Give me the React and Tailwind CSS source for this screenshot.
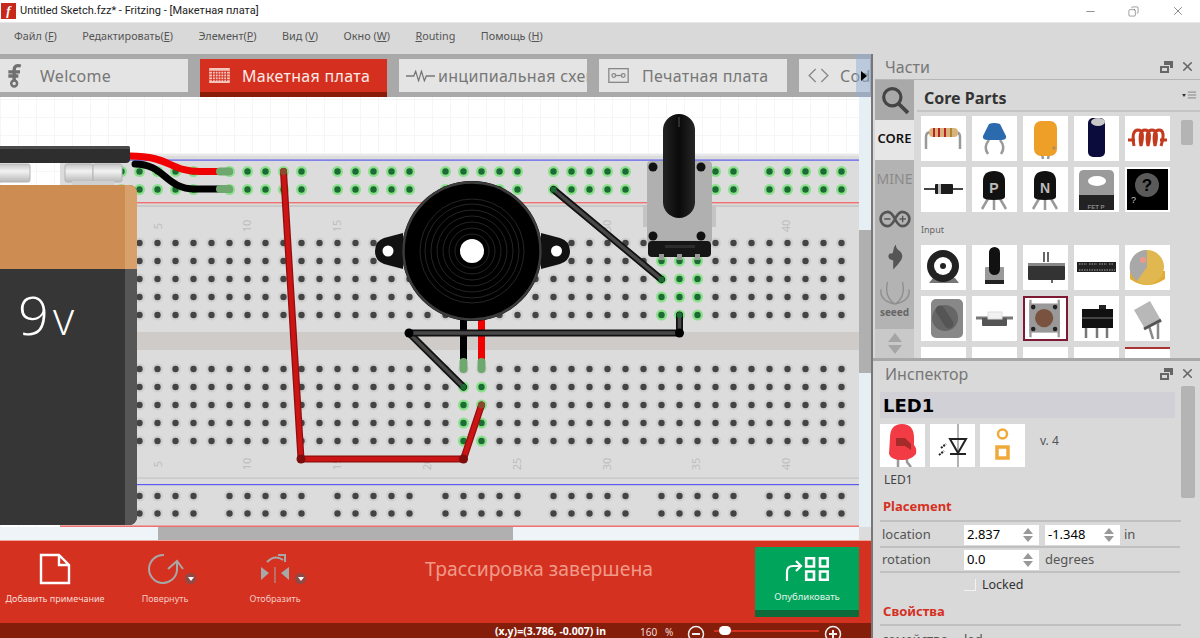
import { Minus, X, Copy, AlignJustify } from "lucide-react";

const menu = [
  ["Файл (", "F", ")"],
  ["Редактировать(", "E", ")"],
  ["Элемент(", "P", ")"],
  ["Вид (", "V", ")"],
  ["Окно (", "W", ")"],
  ["", "R", "outing"],
  ["Помощь (", "H", ")"],
];

const railGroups = [0, 6, 12, 18, 24, 30, 36];
const colX = (k) => 121.5 + 18 * k;

function Hole({ x, y, green }) {
  return (
    <g>
      <circle cx={x} cy={y} r="5.5" fill={green ? "#8ae08a" : "#cfcfcf"} />
      <circle cx={x} cy={y} r="3.2" fill={green ? "#1c6b34" : "#444"} />
    </g>
  );
}

function isGreen(k, y) {
  const x = colX(k);
  if ([661.5, 679.5, 697.5].includes(x) && y > 250 && y < 320) return true;
  if ([463.5, 481.5].includes(x) && y > 380 && y < 445) return true;
  return false;
}

function Wire({ d, outer, inner, w = 3.5 }) {
  return (
    <g fill="none" strokeLinecap="round" strokeLinejoin="round">
      <path d={d} stroke={outer} strokeWidth="7" />
      <path d={d} stroke={inner} strokeWidth={w} />
    </g>
  );
}

function Breadboard() {
  const holes = [];
  for (const start of railGroups) {
    for (let i = 0; i < 5; i++) {
      holes.push(<Hole key={`t${start}${i}a`} x={colX(start + i)} y={171.5} green />);
      holes.push(<Hole key={`t${start}${i}b`} x={colX(start + i)} y={189.5} green />);
      holes.push(<Hole key={`b${start}${i}a`} x={colX(start + i)} y={496} />);
      holes.push(<Hole key={`b${start}${i}b`} x={colX(start + i)} y={513.5} />);
    }
  }
  for (let k = 0; k < 41; k++) {
    for (const y of [243, 261, 279, 297, 315, 369, 387, 405, 423, 441]) {
      holes.push(<Hole key={`m${k}${y}`} x={colX(k)} y={y} green={isGreen(k, y)} />);
    }
  }

  return (
    <svg viewBox="0 97 859 430" className="block w-[859px] h-[430px]">
      <defs>
        <pattern id="grid" x="0" y="99" width="18" height="18" patternUnits="userSpaceOnUse">
          <path d="M18 0H0V18" fill="none" stroke="#e9eef2" strokeWidth="1" />
        </pattern>
        <linearGradient id="knob" x1="0" x2="1" y1="0" y2="0">
          <stop offset="0" stopColor="#222" />
          <stop offset="0.5" stopColor="#0a0a0a" />
          <stop offset="1" stopColor="#262626" />
        </linearGradient>
        <linearGradient id="metal" x1="0" x2="0" y1="0" y2="1">
          <stop offset="0" stopColor="#c4c4c4" />
          <stop offset="0.4" stopColor="#f2f2f2" />
          <stop offset="1" stopColor="#b8b8b8" />
        </linearGradient>
      </defs>
      <rect x="0" y="97" width="859" height="430" fill="#fff" />
      <rect x="0" y="97" width="859" height="430" fill="url(#grid)" />

      {/* board */}
      <rect x="60" y="154" width="799" height="373" fill="#dcdcdc" />
      <rect x="60" y="154" width="799" height="2" fill="#e8e8e8" />
      <rect x="60" y="205" width="799" height="2" fill="#c9c9c9" />
      <rect x="60" y="159.5" width="799" height="1.2" fill="#5a5af0" />
      <rect x="60" y="202" width="799" height="1.4" fill="#f07070" />
      <rect x="60" y="332" width="799" height="18" fill="#cfcbc9" />
      <rect x="60" y="477.5" width="799" height="1.2" fill="#c4c4c4" />
      <rect x="60" y="484" width="799" height="1.2" fill="#5a5af0" />
      <rect x="60" y="525.5" width="799" height="1.5" fill="#f07070" />

      {holes}

      <g fill="#bdbdbd" fontSize="11" fontFamily="'Noto Sans', sans-serif" textAnchor="middle">
        {[[159, "5"], [248, "10"], [338, "15"], [608, "30"], [787, "40"]].map(([x, t]) => (
          <text key={t} x={x} y={226} transform={`rotate(-90 ${x} 226)`} dominantBaseline="middle">{t}</text>
        ))}
        {[[159, "5"], [248, "10"], [338, "15"], [428, "20"], [518, "25"], [608, "30"], [697, "35"], [787, "40"]].map(([x, t]) => (
          <text key={t} x={x} y={464} transform={`rotate(-90 ${x} 464)`} dominantBaseline="middle">{t}</text>
        ))}
      </g>

      {/* battery wires */}
      <g fill="none" strokeLinecap="round">
        <path d="M135 164 C165 164 165 189 195 189 L226 189" stroke="#000" strokeWidth="7" />
        <path d="M130 156 C170 156 170 171.5 200 171.5 L226 171.5" stroke="#f00000" strokeWidth="7" />
        <path d="M220 171.5 H229" stroke="#6fa86f" strokeWidth="8" />
        <path d="M220 189 H229" stroke="#6fa86f" strokeWidth="8" />
      </g>

      {/* 9v battery */}
      <g>
        <rect x="-6" y="146" width="136" height="17" rx="4" fill="#2e2e2e" />
        <rect x="-6" y="146" width="136" height="3" rx="1.5" fill="#4a4a4a" />
        <g fill="url(#metal)" stroke="#b5b5b5">
          <rect x="-8" y="164" width="38" height="18" rx="2" />
          <rect x="65" y="164" width="28" height="18" rx="2" />
          <rect x="93" y="164" width="29" height="18" rx="2" />
        </g>
        <rect x="72" y="181" width="42" height="6" fill="#cfcfcf" />
        <rect x="-8" y="185" width="145" height="340" rx="8" fill="#363636" />
        <path d="M-8 269V193a8 8 0 0 1 8-8H129a8 8 0 0 1 8 8V269Z" fill="#cd8d52" />
        <path d="M125 269V185h4a8 8 0 0 1 8 8V269Z" fill="#d8a06a" />
        <path d="M125 269H137V517a8 8 0 0 1-8 8H125Z" fill="#565656" />
        <text x="18" y="335" fill="#fff" fontSize="54" fontFamily="'Open Sans', sans-serif" fontWeight="300">9</text>
        <text x="53" y="335" fill="#fff" fontSize="46" fontFamily="'Open Sans', sans-serif" fontWeight="300">v</text>
      </g>

      {/* buzzer legs */}
      <path d="M463.5 315V365" stroke="#000" strokeWidth="7" />
      <path d="M481.5 315V365" stroke="#f00000" strokeWidth="7" />
      <path d="M463.5 362V369M481.5 362V369" stroke="#6fa86f" strokeWidth="8" strokeLinecap="round" />

      {/* wires */}
      <Wire d="M553.5 189.5L661.5 279.5" outer="#111" inner="#484848" />
      <Wire d="M409 333L463.5 387" outer="#111" inner="#484848" />
      <Wire d="M409 333H679.5V315" outer="#111" inner="#484848" />
      <circle cx="409" cy="333" r="4.5" fill="#000" />
      <circle cx="679.5" cy="333" r="4.5" fill="#000" />
      <Wire d="M283.5 171.5L301 459H463.5L481.5 405" outer="#8f0f0f" inner="#cc1414" w={4.5} />
      <circle cx="301" cy="459" r="4.5" fill="#7d0c0c" />
      <circle cx="463.5" cy="459" r="4.5" fill="#7d0c0c" />
      <circle cx="283.5" cy="171.5" r="3.5" fill="#8a4a30" />
      <circle cx="481.5" cy="405" r="3.5" fill="#8a4a30" />
      <circle cx="553.5" cy="189.5" r="3" fill="#1c6b34" />
      <circle cx="661.5" cy="279.5" r="3" fill="#1c6b34" />
      <circle cx="463.5" cy="387" r="3" fill="#1c6b34" />
      <circle cx="679.5" cy="315" r="3" fill="#1c6b34" />

      {/* buzzer */}
      <path d="M403 233L384 238Q375 241 375 251Q375 261 384 264L403 269Z" fill="#111" />
      <path d="M541 233L560 238Q570 241 570 251Q570 261 560 264L541 269Z" fill="#111" />
      <circle cx="388" cy="251" r="5.5" fill="#fff" />
      <circle cx="556.5" cy="251" r="5.5" fill="#fff" />
      <circle cx="472" cy="251" r="70" fill="#000" />
      <circle cx="472" cy="251" r="68.5" fill="none" stroke="#3c3c3c" strokeWidth="2.5" />
      <g fill="none" stroke="#2f2f2f" strokeWidth="0.8">
        {[17, 23, 29, 35, 41, 47, 52].map((r) => (
          <circle key={r} cx="472" cy="251" r={r} />
        ))}
      </g>
      <circle cx="472" cy="251" r="12" fill="#fff" />

      {/* potentiometer */}
      <rect x="643" y="205" width="4" height="22" fill="#c4c4c4" />
      <rect x="712" y="205" width="4" height="22" fill="#c4c4c4" />
      <rect x="647" y="161" width="65" height="82" rx="4" fill="#b0b0b0" />
      <rect x="648" y="241" width="63" height="16" rx="4" fill="#161616" />
      <rect x="665" y="245" width="30" height="3" fill="#2c2c2c" />
      <g fill="#999">
        <rect x="659" y="254" width="5" height="6" />
        <rect x="677" y="254" width="5" height="6" />
        <rect x="695" y="254" width="5" height="6" />
      </g>
      {[[653, 167], [701, 167], [653, 236], [701, 236]].map(([x, y]) => (
        <circle key={`${x}${y}`} cx={x} cy={y} r="4.5" fill="#111" />
      ))}
      <rect x="663" y="114" width="32" height="104" rx="16" fill="url(#knob)" />
      <path d="M679 117V127" stroke="#555" strokeWidth="1" />
    </svg>
  );
}

// little pictures in the parts bin
const T = ({ children, picked }) => (
  <div className={`w-[45px] h-[45px] bg-white shrink-0 ${picked ? "border-2 border-[#7d1a33]" : ""}`}>
    <svg viewBox="0 0 45 45" className="w-full h-full block">{children}</svg>
  </div>
);

const leg = { fill: "none", stroke: "#999", strokeWidth: 2.5 };

const row1 = [
  <>
    <path d="M5 33V21Q5 16 10 16H34Q39 16 39 21V33" {...leg} />
    <rect x="8" y="12" width="29" height="9" rx="4" fill="#d8b37c" />
    <path d="M13 12v9M18 12v9M24 12v9" stroke="#b22" strokeWidth="2" />
    <path d="M30 12v9" stroke="#a83" strokeWidth="2" />
  </>,
  <>
    <path d="M17 24Q11 31 16 38M28 24Q34 31 29 38" {...leg} />
    <path d="M17 8Q22 6 28 8L34 20Q35 24 29 24H16Q10 24 11 20Z" fill="#2b6bad" />
  </>,
  <>
    <path d="M19 38l1 5M26 38l-1 5" {...leg} />
    <rect x="11" y="5" width="23" height="35" rx="7" fill="#ee9f28" />
    <path d="M29 32h4M31 30v4" stroke="#a86" strokeWidth="1" />
  </>,
  <>
    <rect x="14" y="2" width="17" height="39" rx="5" fill="#0c0c3c" />
    <ellipse cx="24" cy="6" rx="7" ry="4" fill="#c8c8c8" />
  </>,
  <>
    <path d="M3 24H10M35 24H42" stroke="#c33a1e" strokeWidth="3" />
    <path d="M9 30Q6 14 13 14T16 30Q13 14 20 14T23 30Q20 14 27 14T30 30Q27 14 34 14T36 30" fill="none" stroke="#c33a1e" strokeWidth="3" />
  </>,
];

const row2 = [
  <>
    <path d="M3 22H42" stroke="#444" strokeWidth="2" />
    <rect x="14" y="17" width="18" height="10" rx="1" fill="#1c1c1c" />
    <rect x="17" y="17" width="3" height="10" fill="#bbb" />
  </>,
  <>
    <path d="M22 30V43M17 30L10 42M27 30L34 42" {...leg} />
    <path d="M11 14Q11 4 22 4Q33 4 33 14V30Q33 33 22 33Q11 33 11 30Z" fill="#111" />
    <text x="22" y="26" fill="#bbb" fontSize="14" fontWeight="700" textAnchor="middle" fontFamily="'Liberation Sans', sans-serif">P</text>
  </>,
  <>
    <path d="M22 30V43M17 30L10 42M27 30L34 42" {...leg} />
    <path d="M11 14Q11 4 22 4Q33 4 33 14V30Q33 33 22 33Q11 33 11 30Z" fill="#111" />
    <text x="22" y="26" fill="#bbb" fontSize="14" fontWeight="700" textAnchor="middle" fontFamily="'Liberation Sans', sans-serif">N</text>
  </>,
  <>
    <path d="M5 8Q5 3 10 3H35Q40 3 40 8V42H5Z" fill="#9a9a9a" />
    <ellipse cx="23" cy="14" rx="9" ry="5" fill="#fff" />
    <rect x="5" y="28" width="35" height="15" fill="#222" />
    <text x="22" y="42" fill="#888" fontSize="6" fontWeight="700" textAnchor="middle" fontFamily="'Liberation Sans', sans-serif">FET P</text>
  </>,
  <>
    <rect x="2" y="2" width="41" height="41" fill="#000" />
    <circle cx="22" cy="18" r="12" fill="#5a5a5a" />
    <text x="22" y="24" fill="#000" fontSize="17" fontWeight="700" textAnchor="middle" fontFamily="'Liberation Sans', sans-serif">?</text>
    <text x="6" y="36" fill="#ccc" fontSize="9" fontFamily="'Liberation Sans', sans-serif">?</text>
  </>,
];

const row3 = [
  <>
    <path d="M8 38H38L34 33H12Z" fill="#777" />
    <circle cx="22" cy="21" r="16" fill="#222" />
    <circle cx="22" cy="21" r="9" fill="#fff" />
    <circle cx="22" cy="21" r="3" fill="#222" />
  </>,
  <>
    <rect x="13" y="22" width="19" height="15" rx="1" fill="#999" />
    <rect x="17" y="2" width="11" height="28" rx="5.5" fill="#111" />
    <rect x="13" y="35" width="19" height="4" fill="#222" />
  </>,
  <>
    <path d="M21 7v10M25 7v10" stroke="#666" strokeWidth="2" />
    <rect x="5" y="18" width="37" height="7" fill="#888" />
    <rect x="5" y="21" width="37" height="14" rx="1" fill="#333" />
    <path d="M29 35v3" stroke="#666" strokeWidth="2" />
  </>,
  <>
    <rect x="3" y="17" width="39" height="10" fill="#222" />
    <path d="M5 19h8M15 19h8M25 19h8M35 19h5M5 25h36" stroke="#aaa" strokeWidth="1" strokeDasharray="1.5 1" />
  </>,
  <>
    <path d="M5 34Q22 46 40 34V26H5Z" fill="#e0ac35" />
    <circle cx="22" cy="22" r="17" fill="#e0b84f" />
    <path d="M22 5A17 17 0 0 0 12 36L22 22Z" fill="#a8a8a8" />
    <circle cx="18" cy="15" r="3" fill="#e98" />
  </>,
];

const row4 = [
  <>
    <rect x="10" y="3" width="32" height="39" rx="5" fill="#888" />
    <circle cx="24" cy="22" r="13" fill="#666" />
    <path d="M19 14L28 28" stroke="#555" strokeWidth="9" strokeLinecap="round" />
  </>,
  <>
    <path d="M4 22H41" stroke="#777" strokeWidth="3" />
    <rect x="10" y="22" width="25" height="8" rx="1" fill="#555" />
    <rect x="16" y="16" width="14" height="7" fill="#f2f2f2" stroke="#ddd" />
  </>,
  <>
    <path d="M6 2V43M37 2V43" stroke="#999" strokeWidth="2.5" />
    <rect x="5" y="6" width="33" height="32" fill="#999" />
    <circle cx="21" cy="22" r="10" fill="#7a5240" />
    <g fill="#222">
      <circle cx="9" cy="10" r="2.5" />
      <circle cx="33" cy="10" r="2.5" />
      <circle cx="9" cy="34" r="2.5" />
      <circle cx="33" cy="34" r="2.5" />
    </g>
  </>,
  <>
    <path d="M12 30V42M23 30V42M33 30V42" stroke="#777" strokeWidth="2.5" />
    <rect x="25" y="9" width="7" height="6" fill="#222" />
    <rect x="8" y="13" width="31" height="19" fill="#111" />
    <rect x="8" y="21" width="31" height="2" fill="#444" />
  </>,
  <>
    <path d="M24 30L28 43M33 24V43" stroke="#888" strokeWidth="2.5" />
    <path d="M9 14L25 5L37 26L20 33Z" fill="#b8b8b8" />
    <path d="M19 33L36 24" stroke="#555" strokeWidth="3" />
  </>,
];

function Row({ items, pickedIndex, className = "" }) {
  return (
    <div className={`flex gap-[6px] ${className}`}>
      {items.map((c, i) => (
        <T key={i} picked={i === pickedIndex}>{c}</T>
      ))}
    </div>
  );
}

function PanelTitle({ children }) {
  return (
    <div className="flex items-center h-[25px] pl-[12px] pr-[5px] text-[16px] text-[#777]">
      <span>{children}</span>
      <svg viewBox="0 0 13 12" className="ml-auto mr-[7px] w-[13px] h-[12px]">
        <path d="M4 0H13V7H10V4H4Z" fill="#666" />
        <path d="M0 5H9V12H0Z" fill="#666" />
        <path d="M2 7H7V10H2Z" fill="#d9d9d9" />
      </svg>
      <X size={15} strokeWidth={2.5} className="text-[#666]" />
    </div>
  );
}

function Spin({ value, w = "w-[75px]" }) {
  return (
    <div className={`${w} h-[20px] bg-white flex items-center pl-[3px] pr-[5px] text-[13px] text-black`}>
      <span>{value}</span>
      <svg viewBox="0 0 12 14" className="ml-auto w-[12px] h-[14px]">
        <path d="M6 0L11 6H1ZM6 14L1 8H11Z" fill="#999" />
      </svg>
    </div>
  );
}

function ToolBtn({ label, children, badge, white }) {
  return (
    <div className="relative w-[110px] flex flex-col items-center">
      <div className="h-[40px] mt-[8px] flex items-center">{children}</div>
      {badge && (
        <span className="absolute left-[75px] top-[32px] w-[11px] h-[11px] rounded-full bg-[#8f4a45] flex items-center justify-center">
          <span className="w-0 h-0 border-l-[3px] border-r-[3px] border-t-[4px] border-l-transparent border-r-transparent border-t-white" />
        </span>
      )}
      <div className={`mt-[3px] text-[9px] leading-[14px] w-[98px] whitespace-nowrap flex justify-center ${white ? "text-[#f8dcd6]" : "text-[#f3c9c0]"}`}>
        {label}
      </div>
    </div>
  );
}

export default function App() {
  return (
    <div className="w-[1200px] h-[638px] overflow-hidden flex flex-col bg-[#d9d9d9] font-['Noto_Sans',sans-serif]">
      {/* title bar */}
      <div className="h-[22px] bg-white flex items-center text-[#222] shrink-0">
        <div className="ml-[1px] w-[15px] h-[16px] bg-[#c8281c] text-white font-bold italic text-[13px] leading-[16px] text-center font-['Liberation_Serif',serif]">f</div>
        <span className="ml-[4px] text-[11px] font-['Roboto',sans-serif]">Untitled Sketch.fzz* - Fritzing - [Макетная плата]</span>
        <div className="ml-auto flex items-center text-[#333]">
          <Minus size={13} strokeWidth={1} className="mr-[31px]" />
          <Copy size={11} strokeWidth={1} className="mr-[32px] -scale-x-100" />
          <X size={14} strokeWidth={1} className="mr-[15px]" />
        </div>
      </div>

      {/* menu */}
      <div className="h-[32px] flex items-center gap-[25.5px] pl-[14px] pb-[4px] text-[10.8px] text-[#555] border-t border-[#e8e8e8] shrink-0">
        {menu.map(([a, u, b]) => (
          <span key={a + u}>{a}<span className="underline">{u}</span>{b}</span>
        ))}
      </div>

      <div className="flex h-[584px]">
        {/* left side */}
        <div className="w-[873px] shrink-0 flex flex-col border-r-2 border-[#777]">
          {/* tabs */}
          <div className="relative h-[43px] bg-[#a9a9a9] flex gap-[12px] pt-[5px] text-[16px] text-[#777] overflow-hidden shrink-0 tracking-[0.3px]">
            <div className="w-[188px] h-[33px] bg-[#e4e4e4] flex items-center shrink-0">
              <svg viewBox="0 0 24 30" className="w-[20px] h-[28px] ml-[5px]">
                <path d="M19 3Q11 1 11 8V20M4 10H18M4 15H16" fill="none" stroke="#707070" strokeWidth="4" />
                <circle cx="11" cy="24" r="3.5" fill="none" stroke="#707070" strokeWidth="3" />
              </svg>
              <span className="ml-[15px]">Welcome</span>
            </div>
            <div className="w-[187px] h-[38px] bg-[#d5301f] border-b-[5px] border-[#8a1c0a] flex items-center text-[#fbeae6] shrink-0">
              <svg viewBox="0 0 22 16" className="w-[21px] h-[15px] ml-[9px]">
                <rect width="22" height="16" fill="#f4c7bf" />
                <path d="M0 3.5H22M0 6.5H22M0 9.5H22M0 12.5H22M3.5 3V14M6.5 3V14M9.5 3V14M12.5 3V14M15.5 3V14M18.5 3V14" stroke="#d5301f" strokeWidth="1" />
              </svg>
              <span className="ml-[12px]">Макетная плата</span>
            </div>
            <div className="w-[188px] h-[33px] bg-[#e4e4e4] flex items-center shrink-0 overflow-hidden whitespace-nowrap">
              <svg viewBox="0 0 30 12" className="w-[29px] h-[12px] ml-[7px] shrink-0">
                <path d="M0 6H8L10 1L13 11L16 1L19 11L21 6H30" fill="none" stroke="#777" strokeWidth="1.3" />
              </svg>
              <span className="ml-[3px]">инципиальная схема</span>
            </div>
            <div className="w-[188px] h-[33px] bg-[#e4e4e4] flex items-center shrink-0">
              <svg viewBox="0 0 22 16" className="w-[21px] h-[15px] ml-[9px]">
                <rect x="0.7" y="0.7" width="20.6" height="14.6" fill="none" stroke="#888" strokeWidth="1.4" />
                <path d="M7 8H15" stroke="#888" strokeWidth="1.4" />
                <circle cx="6" cy="8" r="2" fill="none" stroke="#888" strokeWidth="1.3" />
                <circle cx="16" cy="8" r="2" fill="none" stroke="#888" strokeWidth="1.3" />
              </svg>
              <span className="ml-[13px]">Печатная плата</span>
            </div>
            <div className="w-[71px] h-[33px] bg-[#e4e4e4] flex items-center shrink-0 overflow-hidden">
              <svg viewBox="0 0 24 16" className="w-[23px] h-[15px] ml-[8px] shrink-0">
                <path d="M9 1L2 8L9 15M15 1L22 8L15 15" fill="none" stroke="#888" strokeWidth="1.4" />
              </svg>
              <span className="ml-[10px]">Code</span>
            </div>
            <div className="absolute right-0 top-0 w-[15px] h-full bg-[#8fb0d4]/50 flex items-center justify-center">
              <span className="w-0 h-0 border-y-[5px] border-l-[6px] border-y-transparent border-l-black" />
            </div>
          </div>

          {/* canvas */}
          <div className="flex h-[430px] shrink-0">
            <Breadboard />
            <div className="w-[12px] bg-[#e6eff4] flex flex-col">
              <div className="h-[133px]" />
              <div className="h-[143px] bg-[#b0b0b0]" />
            </div>
          </div>

          {/* scrollbar under canvas */}
          <div className="h-[14px] flex shrink-0 border-b border-[#f0a79b]">
            <div className="w-[158px] bg-[#eef4f7]" />
            <div className="w-[355px] bg-[#b0b0b0]" />
            <div className="w-[346px] bg-[#eef4f7]" />
            <div className="w-[12px] bg-[#dcdcdc]" />
          </div>

          {/* red toolbar */}
          <div className="h-[82px] bg-[#d53120] flex shrink-0">
            <ToolBtn label="Добавить примечание" white>
              <svg viewBox="0 0 32 32" className="w-[32px] h-[32px]">
                <path d="M2 2H20L30 12V30H2ZM20 2V12H30" fill="none" stroke="#fff" strokeWidth="2.4" />
              </svg>
            </ToolBtn>
            <ToolBtn label="Повернуть" badge>
              <svg viewBox="0 0 38 32" className="w-[38px] h-[32px]">
                <path d="M18 2A14 14 0 1 0 31 17" fill="none" stroke="#a8a8a8" strokeWidth="2" />
                <path d="M22 16L31 8L37 16M31 8V18" fill="none" stroke="#a8a8a8" strokeWidth="2" />
              </svg>
            </ToolBtn>
            <ToolBtn label="Отобразить" badge>
              <svg viewBox="0 0 30 32" className="w-[30px] h-[32px]">
                <path d="M1 14L9 20L1 27ZM29 14L21 20L29 27Z" fill="#a8a8a8" />
                <path d="M15 14V30" stroke="#a8a8a8" strokeWidth="1" />
                <path d="M7 9Q15 1 23 7" fill="none" stroke="#a8a8a8" strokeWidth="2" />
                <path d="M18 2H25V9" fill="none" stroke="#a8a8a8" strokeWidth="2" />
              </svg>
            </ToolBtn>
            <div className="ml-[95px] mt-[13px] text-[19.4px] text-[#f09a88] whitespace-nowrap">Трассировка завершена</div>
            <div className="ml-auto mr-[12px] mt-[6px] w-[104px] h-[70px] bg-[#00a45a] border-b-[7px] border-[#0d6a3a] flex flex-col items-center">
              <svg viewBox="0 0 44 24" className="w-[44px] h-[24px] mt-[10px]">
                <path d="M2 24V15Q2 9 8 9H15M11 4L16 9L11 14" fill="none" stroke="#fff" strokeWidth="2.2" />
                <path d="M21.2 1.3H29V9.5H21.2ZM35 1.3H42.7V9.5H35ZM21.2 14.5H29V22.7H21.2ZM35 14.5H42.7V22.7H35Z" fill="none" stroke="#fff" strokeWidth="2.6" />
              </svg>
              <div className="mt-[9px] text-[9.5px] text-[#e4f5ec]">Опубликовать</div>
            </div>
          </div>

          {/* status */}
          <div className="h-[15px] bg-[#841d0a] flex items-start overflow-hidden shrink-0 text-[#f2dad5]">
            <span className="ml-[495px] mt-[1px] text-[10.5px] leading-[14px] font-bold text-white whitespace-nowrap">(x,y)=(3.786, -0.007) in</span>
            <span className="ml-[34px] mt-[3px] text-[10px] leading-[12px] whitespace-pre">160   %</span>
            <svg viewBox="0 0 18 18" className="ml-[14px] mt-[2px] w-[18px] h-[18px] shrink-0">
              <circle cx="9" cy="9" r="7.5" fill="none" stroke="#eee" strokeWidth="1.5" />
              <path d="M5 9H13" stroke="#eee" strokeWidth="2" />
            </svg>
            <div className="relative ml-[9px] mt-[7px] w-[105px] h-[2px] bg-[#d53120] shrink-0">
              <span className="absolute left-[5px] -top-[4px] w-[12px] h-[9px] rounded-full bg-white" />
            </div>
            <svg viewBox="0 0 18 18" className="ml-[5px] mt-[2px] w-[18px] h-[18px] shrink-0">
              <circle cx="9" cy="9" r="7.5" fill="none" stroke="#eee" strokeWidth="1.5" />
              <path d="M5 9H13M9 5V13" stroke="#eee" strokeWidth="2" />
            </svg>
          </div>
        </div>

        {/* right side */}
        <div className="flex-1 flex flex-col min-w-0">
          {/* parts */}
          <div className="h-[304px] flex flex-col shrink-0 overflow-hidden">
            <PanelTitle>Части</PanelTitle>
            <div className="flex flex-1 min-h-0 border-t border-[#b5b5b5] ml-[2px]">
              <div className="w-[39px] shrink-0 flex flex-col text-center">
                <div className="h-[40px] bg-[#a9a9a9] flex items-center justify-center">
                  <svg viewBox="0 0 26 26" className="w-[28px] h-[28px]">
                    <circle cx="10.5" cy="10.5" r="8" fill="none" stroke="#444" strokeWidth="3" />
                    <path d="M16 16L25 25" stroke="#444" strokeWidth="3.5" />
                  </svg>
                </div>
                <div className="h-[40px] bg-[#e6e6e6] flex items-center justify-center pb-[2px] text-[13px] font-semibold text-[#111]">CORE</div>
                <div className="h-[169px] bg-[#b3b3b3] flex flex-col items-center text-[#8a8a8a]">
                  <div className="h-[37px] flex items-center text-[14px]">MINE</div>
                  <svg viewBox="0 0 36 20" className="w-[34px] h-[18px] mt-[13px]">
                    <path d="M10 2A8 8 0 1 0 10 18Q14 18 18 10Q22 2 26 2A8 8 0 1 1 26 18Q22 18 18 10Q14 2 10 2Z" fill="none" stroke="#555" strokeWidth="3" />
                    <path d="M6 10H13M23 10H30M26.5 6.5V13.5" stroke="#555" strokeWidth="1.5" />
                  </svg>
                  <svg viewBox="0 0 20 28" className="w-[18px] h-[26px] mt-[16px]">
                    <path d="M8 28V18Q0 16 4 10Q8 11 8 7Q8 3 11 0Q11 5 15 7Q20 11 17 17Q14 22 8 28Z" fill="#555" />
                  </svg>
                  <svg viewBox="0 0 36 28" className="w-[34px] h-[26px] mt-[10px]">
                    <path d="M18 26Q6 18 10 2M18 26Q30 18 26 2M18 26Q1 22 3 10M18 26Q35 22 33 10" fill="none" stroke="#8f8f8f" strokeWidth="1.5" />
                  </svg>
                  <div className="text-[10px] leading-[12px] font-bold text-[#666]">seeed</div>
                </div>
                <div className="h-[29px] bg-[#c9c9c9] flex flex-col items-center justify-center gap-[3px]">
                  <span className="w-0 h-0 border-x-[7px] border-b-[9px] border-x-transparent border-b-[#a5a5a5]" />
                  <span className="w-0 h-0 border-x-[7px] border-t-[9px] border-x-transparent border-t-[#a5a5a5]" />
                </div>
              </div>
              <div className="flex-1 min-w-0 flex flex-col">
                <div className="h-[32px] flex items-center ml-[3px] border-b-2 border-[#c4c4c4] shrink-0">
                  <span className="ml-[7px] mt-[5px] text-[16px] font-bold text-[#333]">Core Parts</span>
                  <span className="ml-auto mr-[3px] flex items-center text-[#555]">
                    <span className="w-0 h-0 mr-[1px] border-x-[2px] border-t-[3px] border-x-transparent border-t-[#333]" />
                    <AlignJustify size={10} strokeWidth={1.5} />
                  </span>
                </div>
                <div className="flex flex-1 min-h-0">
                  <div className="w-[267px] pl-[7px] pt-[4px] shrink-0">
                    <Row items={row1} />
                    <Row items={row2} className="mt-[6px]" />
                    <div className="h-[33px] pt-[11px] text-[9px] leading-[14px] text-[#666]">Input</div>
                    <Row items={row3} />
                    <Row items={row4} pickedIndex={2} className="mt-[6px]" />
                    <div className="flex gap-[6px] mt-[6px]">
                      {[0, 1, 2, 3, 4].map((i) => (
                        <div key={i} className={`w-[45px] h-[20px] bg-white ${i === 4 ? "border-t-2 border-[#a33]" : ""}`} />
                      ))}
                    </div>
                  </div>
                  <div className="pt-[8px]">
                    <div className="w-[12px] h-[25px] rounded-[2px] bg-[#b4b4b4]" />
                  </div>
                </div>
              </div>
            </div>
          </div>

          {/* inspector */}
          <div className="flex-1 min-h-0 flex flex-col border-t-[3px] border-[#a8a8a8] overflow-hidden">
            <PanelTitle>Инспектор</PanelTitle>
            <div className="flex flex-1 min-h-0">
              <div className="w-[308px] pl-[7px] shrink-0">
                <div className="w-[295px] h-[26px] mt-[6px] bg-[#d0d0d6] flex items-center pl-[3px] pt-[1px] text-[18px] font-bold text-black font-['DejaVu_Sans',sans-serif]">LED1</div>
                <div className="flex gap-[5px] mt-[6px] items-start">
                  <svg viewBox="0 0 45 43" className="w-[45px] h-[43px] bg-white">
                    <path d="M18 34V43M27 34V38L31 43" stroke="#999" strokeWidth="2.5" fill="none" />
                    <path d="M10 14Q10 0 22 0Q34 0 34 14V21Q37 24 36 30Q31 36 22 36Q11 36 9 30Z" fill="#f23b44" />
                    <path d="M16 14H25L31 20V26L25 22H16Z" fill="#a52a2a" />
                  </svg>
                  <svg viewBox="0 0 45 43" className="w-[45px] h-[43px] bg-white">
                    <path d="M28 0V43" stroke="#999" strokeWidth="1.5" />
                    <path d="M20 15H36L28 29ZM20 30H36" fill="none" stroke="#222" strokeWidth="2" />
                    <path d="M11 24L16 20M9 31L14 27" stroke="#222" strokeWidth="2" strokeDasharray="2 1" />
                  </svg>
                  <svg viewBox="0 0 45 43" className="w-[45px] h-[43px] bg-white">
                    <circle cx="22.5" cy="10" r="4.5" fill="none" stroke="#f2a93b" strokeWidth="2.5" />
                    <rect x="17" y="23" width="11" height="11" fill="none" stroke="#f2a93b" strokeWidth="3.5" />
                  </svg>
                  <span className="ml-[10px] mt-[8px] text-[12px] text-[#555]">v. 4</span>
                </div>
                <div className="mt-[4px] pl-[4px] text-[12px] leading-[18px] text-[#444]">LED1</div>
                <div className="mt-[8px] h-[22px] text-[13px] font-bold text-[#d5301f] border-b-2 border-[#c0c0c0] w-[298px] pl-[3px] box-content pb-[1px]">Placement</div>
                <div className="w-[298px] h-[23px] pt-[1px] flex items-center border-b-2 border-[#c0c0c0] pl-[2px] text-[13px] text-[#555] box-content">
                  <span className="w-[82px]">location</span>
                  <Spin value="2.837" />
                  <span className="w-[6px]" />
                  <Spin value="-1.348" />
                  <span className="ml-[4px]">in</span>
                </div>
                <div className="w-[298px] h-[23px] flex items-center border-b-2 border-[#c0c0c0] pl-[2px] text-[13px] text-[#555] box-content">
                  <span className="w-[82px]">rotation</span>
                  <Spin value="0.0" />
                  <span className="ml-[6px]">degrees</span>
                </div>
                <div className="w-[298px] h-[24px] flex items-center pl-[84px] text-[12.5px] text-[#333]">
                  <span className="w-[12px] h-[12px] border-r border-b border-[#f2f2f2]" />
                  <span className="ml-[6px]">Locked</span>
                </div>
                <div className="mt-[5px] h-[22px] text-[13px] font-bold text-[#d5301f] border-b-2 border-[#c0c0c0] w-[298px] pl-[3px] box-content">Свойства</div>
                <div className="flex pl-[2px] text-[13px] text-[#555] mt-[4px]">
                  <span className="w-[82px]">семейство</span>
                  <span>led</span>
                </div>
              </div>
              <div>
                <div className="w-[14px] h-[112px] rounded-[2px] bg-[#b4b4b4]" />
              </div>
            </div>
          </div>
        </div>
      </div>
    </div>
  );
}
